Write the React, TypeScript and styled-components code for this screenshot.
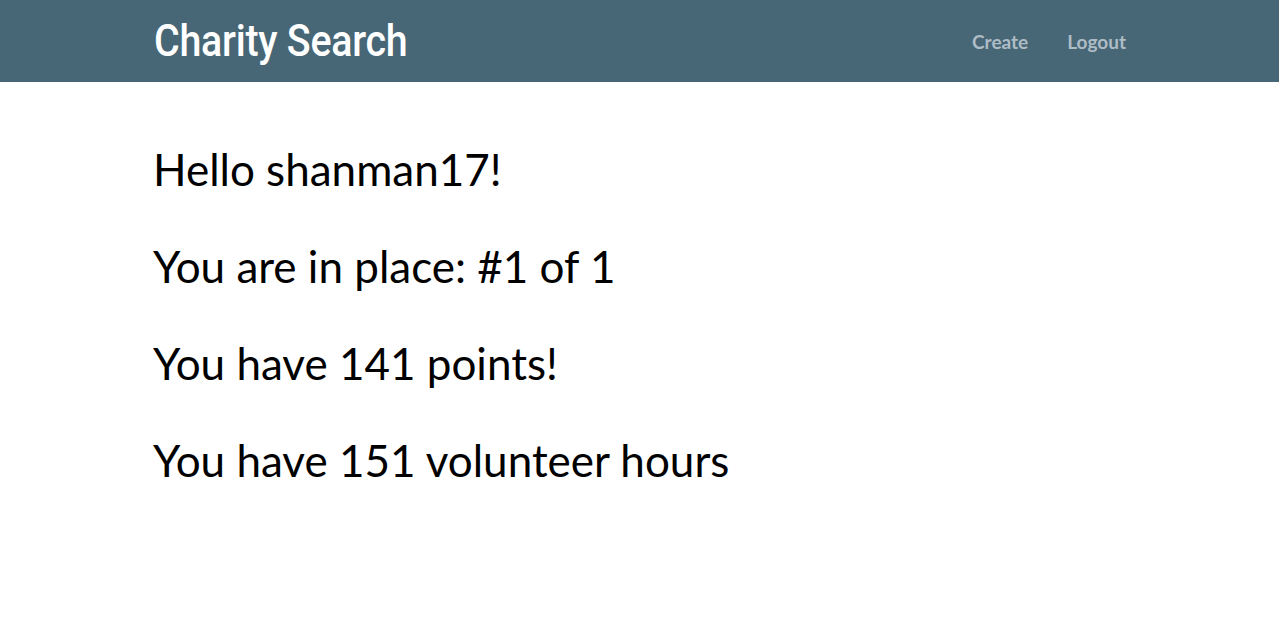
import React from "react";
import styled, { createGlobalStyle } from "styled-components";

const Global = createGlobalStyle`
  html, body { margin: 0; padding: 0; background: #ffffff; }
  body { font-family: Lato, "Open Sans", sans-serif; color: #000; }
`;

const NavBar = styled.nav`
  height: 82px;
  background: #476676;
  display: flex;
  align-items: center;
`;

const NavInner = styled.div`
  width: 972px;
  margin-left: 154px;
  display: flex;
  align-items: center;
  justify-content: space-between;
`;

const Brand = styled.a`
  display: inline-block;
  font-family: Roboto, sans-serif;
  font-weight: 500;
  font-size: 45px;
  color: #ffffff;
  text-decoration: none;
  transform: scaleX(0.875);
  transform-origin: left center;
  letter-spacing: -0.3px;
  margin-top: -2px;
`;

const Links = styled.div`
  display: flex;
  gap: 39px;
`;

const NavLink = styled.a`
  font-family: Lato, sans-serif;
  font-weight: 700;
  font-size: 19px;
  color: #aebcc5;
  text-decoration: none;
`;

const Main = styled.main`
  padding: 63px 0 0 153px;
  display: flex;
  flex-direction: column;
  gap: 49px;
`;

const Line = styled.h1`
  margin: 0;
  font-family: Lato, sans-serif;
  font-weight: 400;
  font-size: 44px;
  line-height: 48px;
`;

export default function App() {
  return (
    <>
      <Global />
      <NavBar>
        <NavInner>
          <Brand href="#">Charity Search</Brand>
          <Links>
            <NavLink href="#">Create</NavLink>
            <NavLink href="#">Logout</NavLink>
          </Links>
        </NavInner>
      </NavBar>
      <Main>
        <Line>Hello shanman17!</Line>
        <Line>You are in place: #1 of 1</Line>
        <Line>You have 141 points!</Line>
        <Line>You have 151 volunteer hours</Line>
      </Main>
    </>
  );
}
